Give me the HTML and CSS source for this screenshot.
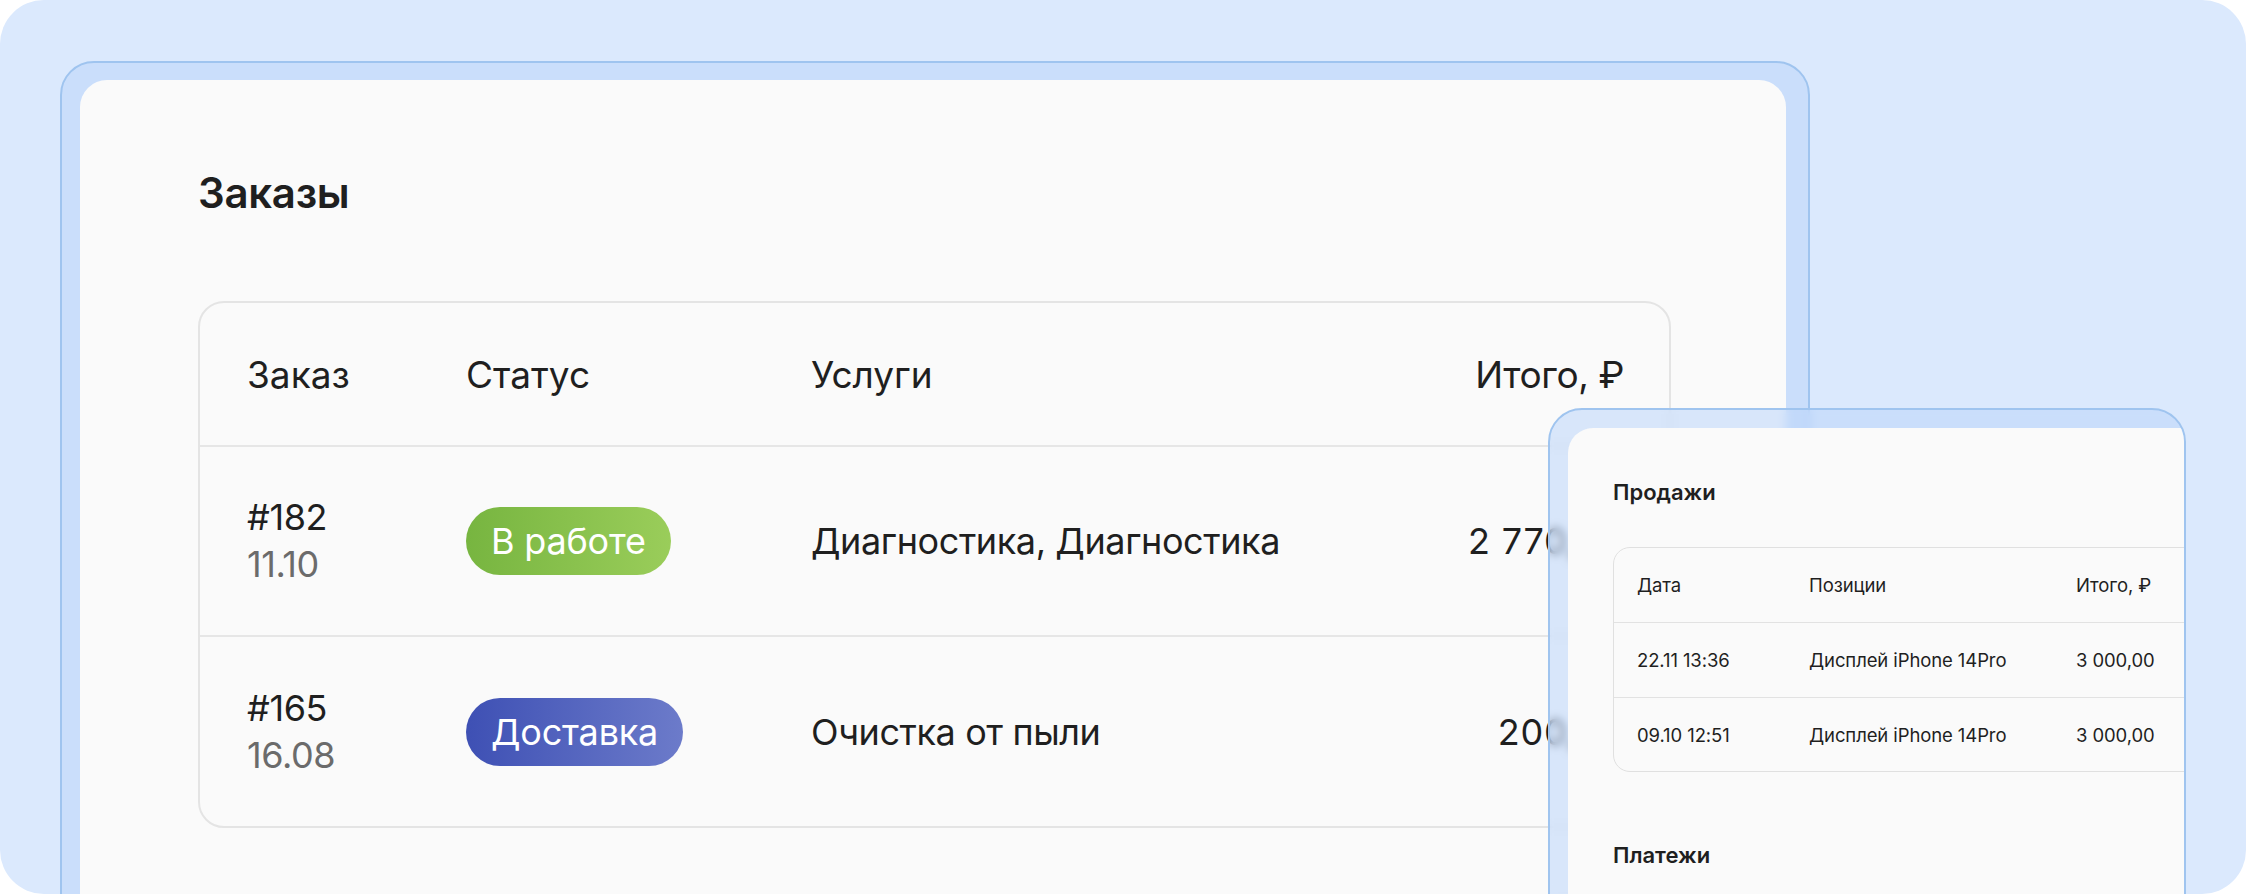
FILE: index.html
```html
<!DOCTYPE html>
<html lang="ru">
<head>
    <meta charset="UTF-8">
    <meta name="viewport" content="width=device-width, initial-scale=1.0">
    <title>Заказы</title>
    <link rel="stylesheet" href="styles.css">
</head>
<body>
    <div class="canvas">
        <div class="frame frame-main">
            <div class="panel">
                <h1 class="title">Заказы</h1>
                <div class="orders">
                    <div class="orders-row orders-head">
                        <div>Заказ</div>
                        <div>Статус</div>
                        <div>Услуги</div>
                        <div class="num">Итого, ₽</div>
                    </div>
                    <div class="orders-row">
                        <div class="order-id">#182<span class="order-date">11.10</span></div>
                        <div><span class="badge badge-work">В работе</span></div>
                        <div>Диагностика, Диагностика</div>
                        <div class="num">2 770,00</div>
                    </div>
                    <div class="orders-row">
                        <div class="order-id">#165<span class="order-date">16.08</span></div>
                        <div><span class="badge badge-delivery">Доставка</span></div>
                        <div>Очистка от пыли</div>
                        <div class="num">200,00</div>
                    </div>
                </div>
            </div>
        </div>

        <div class="frame frame-sales">
            <div class="panel panel-sales">
                <h2 class="subtitle">Продажи</h2>
                <div class="sales">
                    <div class="sales-row sales-head">
                        <div>Дата</div>
                        <div>Позиции</div>
                        <div>Итого, ₽</div>
                    </div>
                    <div class="sales-row">
                        <div>22.11 13:36</div>
                        <div>Дисплей iPhone 14Pro</div>
                        <div>3 000,00</div>
                    </div>
                    <div class="sales-row">
                        <div>09.10 12:51</div>
                        <div>Дисплей iPhone 14Pro</div>
                        <div>3 000,00</div>
                    </div>
                </div>
                <h2 class="subtitle subtitle-payments">Платежи</h2>
            </div>
        </div>
    </div>
</body>
</html>
```

FILE: styles.css
```css
* {
    box-sizing: border-box;
}
body {
    margin: 0;
    background: #fff;
    font-family: Inter, 'Noto Sans', sans-serif;
    color: #1f1f1f;
}
.canvas {
    position: relative;
    width: 2246px;
    height: 894px;
    background: #dbe9fd;
    border-radius: 44px;
    overflow: hidden;
    padding: 61px 0 0 60px;
}
.frame {
    border: 2px solid #9fc4ef;
    border-radius: 34px;
    background: rgba(188, 214, 250, 0.55);
    overflow: hidden;
}
.frame-main {
    width: 1750px;
    height: 900px;
    padding: 17px 22px 0 18px;
}
.panel {
    height: 100%;
    background: #fafafa;
    border-radius: 27px 27px 0 0;
}
.frame-main .panel {
    padding: 88px 115px 0 118px;
}
.title {
    margin: 0 0 83px 0;
    font-size: 42px;
    line-height: 50px;
    font-weight: 600;
    letter-spacing: -0.3px;
}

/* orders table */
.orders {
    border: 2px solid #e4e4e4;
    border-radius: 26px;
    background: #fafafa;
    font-size: 36px;
    letter-spacing: -0.4px;
}
.orders-row {
    display: grid;
    grid-template-columns: 219px 345px 1fr auto;
    align-items: center;
    height: 190px;
    padding: 0 45px 0 47px;
    border-bottom: 2px solid #e6e6e6;
}
.orders-row:last-child {
    border-bottom: none;
    height: 189px;
}
.orders-head {
    height: 144px;
    font-size: 37px;
    letter-spacing: 0;
}
.num {
    text-align: right;
    letter-spacing: 0.8px;
}
.orders-head .num {
    letter-spacing: -0.4px;
}
.order-id {
    display: flex;
    flex-direction: column;
    line-height: 47px;
}
.order-date {
    color: #6b6b6b;
}
.badge {
    display: inline-flex;
    align-items: center;
    height: 68px;
    padding: 0 25px;
    border-radius: 34px;
    color: #fff;
    font-size: 36px;
    letter-spacing: -0.2px;
}
.badge-work {
    background: linear-gradient(90deg, #77b540 0%, #9acd5a 100%);
}
.badge-delivery {
    background: linear-gradient(90deg, #3e50b4 0%, #6c7bca 100%);
}

/* sales card on top */
.frame-sales {
    position: absolute;
    left: 1548px;
    top: 408px;
    width: 638px;
    height: 560px;
    padding: 18px 0 0 18px;
    backdrop-filter: blur(4px);
}
.panel-sales {
    border-radius: 25px 0 0 0;
    padding: 51px 0 0 45px;
}
.subtitle {
    margin: 0;
    font-size: 22px;
    line-height: 26px;
    font-weight: 600;
}
.subtitle-payments {
    margin-top: 70px;
}
.sales {
    width: 640px;
    margin-top: 42px;
    border: 1px solid #e0e0e0;
    border-radius: 17px;
    font-size: 18.5px;
    letter-spacing: -0.1px;
}
.sales-row {
    display: grid;
    grid-template-columns: 172px 267px auto;
    align-items: center;
    height: 75px;
    padding-left: 23px;
    border-bottom: 1px solid #e2e2e2;
}
.sales-row:last-child {
    border-bottom: none;
    height: 73px;
}
```
